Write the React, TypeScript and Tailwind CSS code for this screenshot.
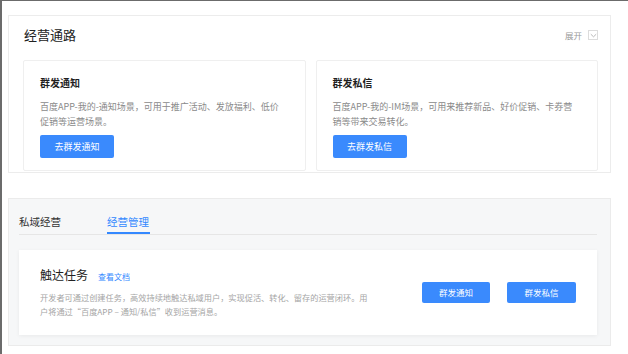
import React from "react";

const font = { fontFamily: '"Noto Sans CJK SC", "Noto Sans", sans-serif' };

function ChannelCard({ title, lines, btn }: { title: string; lines: string[]; btn: string }) {
  return (
    <div className="h-[111px] flex-1 rounded-[2px] border border-[#efefef] bg-white pl-[16px] pt-[15px]">
      <div className="text-[10px] font-bold leading-[14px] text-[#1f1f1f]">{title}</div>
      <div className="mt-[9px] text-[9px] leading-[15px] text-[#8a8a8a]">
        {lines.map((l, i) => (
          <div key={i} className="whitespace-nowrap">{l}</div>
        ))}
      </div>
      <button className="mt-[6px] flex h-[23px] w-[74px] items-center justify-center rounded-[2px] bg-[#3a8afd] text-[9px] text-white">
        {btn}
      </button>
    </div>
  );
}

export default function App() {
  return (
    <div
      style={font}
      className="h-[354px] w-[628px] overflow-hidden border-l-2 border-t border-[#6b6b6b] bg-white pl-[6px] pt-[14px]"
    >
      {/* top panel */}
      <div className="h-[158px] w-[603px] overflow-hidden border border-[#ececec] bg-white pl-[14px] pr-[12px]">
        <div className="flex h-[36px] items-center justify-between pl-[1px] pt-[2px]">
          <div className="text-[13px] leading-[16px] text-[#222]">经营通路</div>
          <div className="flex items-center gap-[6px]">
            <span className="text-[8.5px] text-[#999]">展开</span>
            <span className="flex h-[10px] w-[10px] items-center justify-center border border-[#dcdcdc]">
              <svg width="7" height="5" viewBox="0 0 7 5">
                <path d="M0.8 1.2 L3.5 3.8 L6.2 1.2" fill="none" stroke="#b0b0b0" strokeWidth="0.9" />
              </svg>
            </span>
          </div>
        </div>
        <div className="mt-[8px] flex gap-[10px]">
          <ChannelCard
            title="群发通知"
            lines={["百度APP-我的-通知场景，可用于推广活动、发放福利、低价", "促销等运营场景。"]}
            btn="去群发通知"
          />
          <ChannelCard
            title="群发私信"
            lines={["百度APP-我的-IM场景，可用来推荐新品、好价促销、卡券营", "销等带来交易转化。"]}
            btn="去群发私信"
          />
        </div>
      </div>

      {/* bottom panel */}
      <div className="mt-[25px] h-[148px] w-[603px] border border-[#ebebeb] bg-[#f6f7f8] pl-[10px] pr-[13px] pt-[16px]">
        <div className="flex border-b border-[#e6e6e6]">
          <div className="pb-[5px] text-[10.5px] leading-[14px] text-[#333]">私域经营</div>
          <div className="ml-[46px] flex flex-col">
            <div className="text-[10.5px] leading-[14px] text-[#3388ff]">经营管理</div>
            <div className="mt-[3px] h-[2px] w-[43px] bg-[#3388ff]" />
          </div>
        </div>
        <div className="mt-[15px] flex h-[85px] items-center justify-between bg-white pl-[21px] pr-[21px] shadow-[0_1px_4px_rgba(0,0,0,0.06)]">
          <div className="flex flex-col">
            <div className="flex items-baseline gap-[10px]">
              <span className="text-[12px] leading-[16px] text-[#222]">触达任务</span>
              <span className="text-[8px] text-[#3388ff]">查看文档</span>
            </div>
            <div className="mt-[7px] text-[8.2px] leading-[14px] text-[#a5a5a5]">
              <div className="whitespace-nowrap">开发者可通过创建任务，高效持续地触达私域用户，实现促活、转化、留存的运营闭环。用</div>
              <div className="whitespace-nowrap">户将通过“百度APP – 通知/私信”收到运营消息。</div>
            </div>
          </div>
          <div className="flex gap-[17px]">
            <button className="flex h-[21px] w-[68px] items-center justify-center rounded-[2px] bg-[#3a8afd] text-[8.5px] text-white">
              群发通知
            </button>
            <button className="flex h-[21px] w-[69px] items-center justify-center rounded-[2px] bg-[#3a8afd] text-[8.5px] text-white">
              群发私信
            </button>
          </div>
        </div>
      </div>
    </div>
  );
}
